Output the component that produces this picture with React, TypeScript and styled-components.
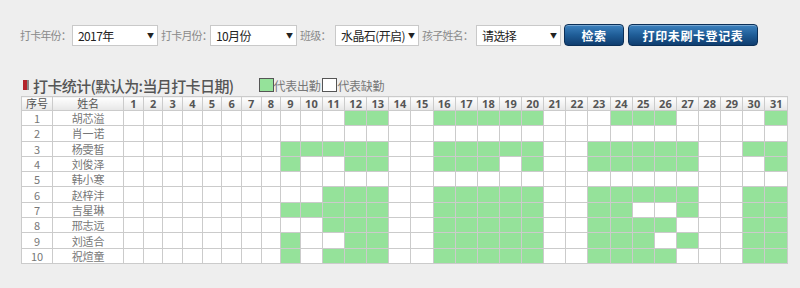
import React from 'react';
import styled, { createGlobalStyle } from 'styled-components';

const GlobalStyle = createGlobalStyle`
  body {
    margin: 0;
    background: #eeeeee;
    font-family: "Noto Sans CJK SC", "Liberation Sans", sans-serif;
  }
`;

const range = (a: number, b: number) => Array.from({ length: b - a + 1 }, (_, i) => a + i);

const students: { name: string; days: number[] }[] = [
  { name: '胡芯溢', days: [12, 13, ...range(16, 20), 24, 25, 26, 31] },
  { name: '肖一诺', days: [] },
  { name: '杨雯皙', days: [...range(9, 13), ...range(16, 20), ...range(23, 27), 30, 31] },
  { name: '刘俊泽', days: [9, 12, 13, 16, 17, 18, 20, ...range(23, 27), 31] },
  { name: '韩小寒', days: [] },
  { name: '赵梓沣', days: [11, 12, 13, ...range(16, 20), ...range(23, 27), 30, 31] },
  { name: '吉星琳', days: [...range(9, 13), ...range(16, 20), 23, 24, 27, 30, 31] },
  { name: '邢志远', days: [11, 12, 13, ...range(16, 20), ...range(23, 26), 30, 31] },
  { name: '刘适合', days: [9, 12, 13, ...range(16, 20), 23, 24, 25, 27, 30, 31] },
  { name: '祝煊童', days: [9, 11, 12, 13, ...range(16, 20), ...range(23, 26), 30, 31] },
];

const monthDays = range(1, 31);

const App: React.FC = () => {
  return (
    <Page>
      <GlobalStyle />
      <FilterBar>
        <Label $w={52}>打卡年份：</Label>
        <Select $w={86}><Value>2017年</Value><Arrow>▼</Arrow></Select>
        <Label $w={52}>打卡月份：</Label>
        <Select $w={87}><Value>10月份</Value><Arrow>▼</Arrow></Select>
        <Label $w={38}>班级：</Label>
        <Select $w={84}><Value>水晶石(开启)</Value><Arrow>▼</Arrow></Select>
        <Label $w={57}>孩子姓名：</Label>
        <Select $w={85}><Value>请选择</Value><Arrow>▼</Arrow></Select>
        <Button $w={60}>检索</Button>
        <Button $w={130}>打印未刷卡登记表</Button>
      </FilterBar>

      <TitleRow>
        <TitleMark />
        <Title>打卡统计(默认为:当月打卡日期)</Title>
        <Legend>
          <LegendBox $on />代表出勤
          <LegendBox />代表缺勤
        </Legend>
      </TitleRow>

      <Table>
        <colgroup>
          <col style={{ width: 31 }} />
          <col style={{ width: 71 }} />
          {monthDays.map(d => (
            <col key={d} style={{ width: d < 10 ? 19.6 : 22.1 }} />
          ))}
        </colgroup>
        <thead>
          <tr>
            <Th>序号</Th>
            <Th>姓名</Th>
            {monthDays.map(d => (
              <Th key={d} $num>{d}</Th>
            ))}
          </tr>
        </thead>
        <tbody>
          {students.map((s, i) => (
            <tr key={s.name}>
              <Td>{i + 1}</Td>
              <Td>{s.name}</Td>
              {monthDays.map(d => (
                <Td key={d} $on={s.days.includes(d)} />
              ))}
            </tr>
          ))}
        </tbody>
      </Table>
    </Page>
  );
};

const Page = styled.div`
  padding: 24px 0 0 20px;
`;

const FilterBar = styled.div`
  display: flex;
  align-items: center;
  height: 22px;
`;

const Label = styled.span<{ $w: number }>`
  width: ${p => p.$w}px;
  box-sizing: border-box;
  padding-left: 3px;
  font-size: 11px;
  letter-spacing: -0.8px;
  color: #8a8a8a;
  white-space: nowrap;
  &:first-child {
    padding-left: 0;
  }
`;

const Select = styled.div<{ $w: number }>`
  width: ${p => p.$w}px;
  height: 21px;
  box-sizing: border-box;
  background: #fff;
  border: 1px solid #c9c9c9;
  display: flex;
  align-items: center;
  padding: 0 3px 0 5px;
  font-size: 12px;
  color: #222;
  white-space: nowrap;
`;

const Value = styled.span`
  flex: 1;
  letter-spacing: -0.6px;
`;

const Arrow = styled.span`
  font-size: 7px;
  color: #222;
  margin-left: 1px;
`;

const Button = styled.button<{ $w: number }>`
  width: ${p => p.$w}px;
  height: 22px;
  margin-left: 4px;
  padding: 0;
  border: 1px solid #0b2f57;
  border-radius: 4px;
  background: linear-gradient(#3d82bf, #1f5d97 50%, #0f3d6f);
  color: #fff;
  font-family: inherit;
  font-size: 12px;
  font-weight: bold;
  letter-spacing: 0.6px;
  box-shadow: inset 0 1px 0 rgba(255, 255, 255, 0.3);
  &:first-of-type {
    margin-left: 3px;
  }
`;

const TitleRow = styled.div`
  display: flex;
  align-items: center;
  height: 22px;
  margin-top: 28px;
  padding-left: 2px;
`;

const TitleMark = styled.span`
  width: 5px;
  height: 10px;
  background: #b3232a;
  border-right: 2px solid #888;
  box-shadow: 1px 0 0 #eee inset;
  margin-right: 4px;
`;

const Title = styled.span`
  font-size: 15px;
  font-weight: 500;
  color: #555;
  letter-spacing: -0.6px;
`;

const Legend = styled.span`
  display: flex;
  align-items: center;
  margin-left: 23px;
  font-size: 12px;
  color: #777;
  letter-spacing: -0.3px;
`;

const LegendBox = styled.span<{ $on?: boolean }>`
  width: 13px;
  height: 12px;
  border: 1px solid #555;
  background: ${p => (p.$on ? '#95e29a' : '#fff')};
  margin-left: 2px;
`;

const Table = styled.table`
  margin-left: 1px;
  width: 767px;
  table-layout: fixed;
  border-collapse: collapse;
  background: #fff;
  font-size: 11px;
`;

const Th = styled.th<{ $num?: boolean }>`
  height: 13px;
  padding: 0;
  line-height: 13px;
  border: 1px solid #cbcbcb;
  background: linear-gradient(#ffffff, #e6e6e6);
  color: #555;
  font-weight: ${p => (p.$num ? 'bold' : 'normal')};
  font-family: ${p => (p.$num ? '"Open Sans", sans-serif' : 'inherit')};
  text-align: center;
`;

const Td = styled.td<{ $on?: boolean }>`
  height: 14.3px;
  padding: 0;
  line-height: 14px;
  border: 1px solid #cbcbcb;
  background: ${p => (p.$on ? '#95e29a' : '#fff')};
  color: #777;
  text-align: center;
`;

export default App;
